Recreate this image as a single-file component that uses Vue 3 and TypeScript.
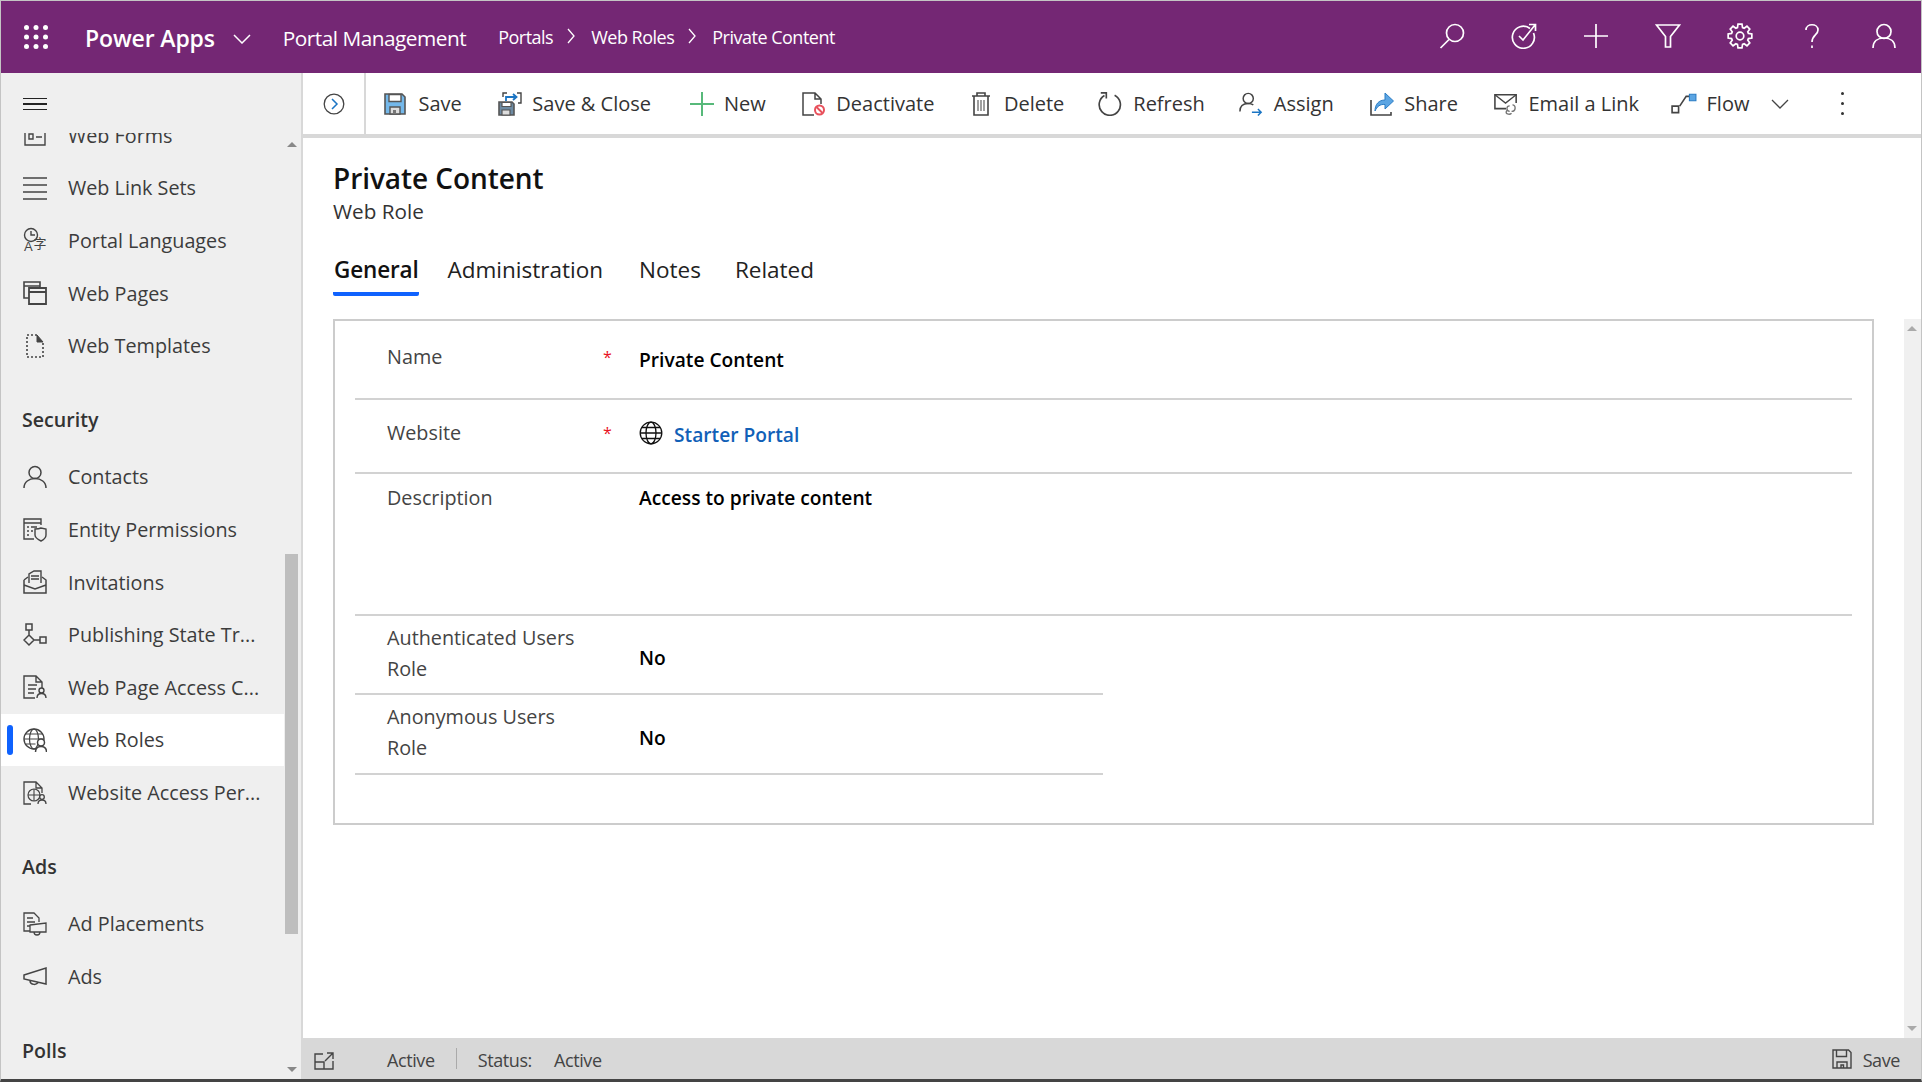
<template>
  <svg class="defs" aria-hidden="true">
    <symbol id="i-save" viewBox="0 0 22 22">
      <path d="M1 1h17l3 3v17H1z" fill="#74b8ea" stroke="#555" stroke-width="1.6"/>
      <path d="M5 1.500h12v7H5z" fill="#fff" stroke="#555" stroke-width="1.4"/>
      <path d="M6 21v-7h10v7z" fill="#ddd" stroke="#555" stroke-width="1.4"/>
      <path d="M9 21v-4h3v4z" fill="#777"/>
    </symbol>
    <symbol id="i-saveclose" viewBox="0 0 24 24">
      <path d="M1 10h13l2 2v11H1z" fill="#6d8ba3" stroke="#555" stroke-width="1.6"/>
      <path d="M4 10.500h9v4H4z" fill="#fff" stroke="#555" stroke-width="1.2"/>
      <path d="M4 23v-5h8v5z" fill="#ddd" stroke="#555" stroke-width="1.2"/>
      <path d="M5 5V1h4M19 1h4v10h-3" stroke="#444" stroke-width="1.4" fill="none"/>
      <path d="M8 9V5h10M15 2l3.500 3-3.500 3" stroke="#1b75c4" stroke-width="1.8" fill="none"/>
    </symbol>
    <symbol id="i-plus" viewBox="0 0 24 24">
      <path d="M12 0v24M0 12h24" stroke="#57b97a" stroke-width="2"/>
    </symbol>
    <symbol id="i-deactivate" viewBox="0 0 24 24">
      <path d="M12 23H1V1h12l6 6v5M13 1v6h6" stroke="#444" stroke-width="1.500" fill="none"/>
      <circle cx="17.500" cy="18" r="4.500" stroke="#e8505b" stroke-width="2" fill="#fff"/>
      <path d="M14.500 15l6 6" stroke="#e8505b" stroke-width="2"/>
    </symbol>
    <symbol id="i-delete" viewBox="0 0 20 24">
      <path d="M1 4h18M6 4V1h8v3M3 4v19h14V4" stroke="#444" stroke-width="1.600" fill="none"/>
      <path d="M7 8v11M10 8v11M13 8v11" stroke="#777" stroke-width="1.400"/>
    </symbol>
    <symbol id="i-refresh" viewBox="0 0 26 26">
      <path d="M18 3.500A11.500 11.500 0 1 1 7 3.800" stroke="#444" stroke-width="1.800" fill="none"/>
      <path d="M3 1h6v6" stroke="#444" stroke-width="1.800" fill="none"/>
    </symbol>
    <symbol id="i-assign" viewBox="0 0 26 26">
      <circle cx="10" cy="7" r="5.500" stroke="#444" stroke-width="1.600" fill="none"/>
      <path d="M1 21c0-6 4-8.500 9-8.500 2 0 4 .5 5.500 1.500" stroke="#444" stroke-width="1.600" fill="none"/>
      <path d="M14 22h10M20.500 18.500L24 22l-3.500 3.500" stroke="#1b75c4" stroke-width="1.600" fill="none"/>
    </symbol>
    <symbol id="i-share" viewBox="0 0 24 24">
      <path d="M1 8v15h20v-3" stroke="#444" stroke-width="1.600" fill="none"/>
      <path d="M5 19c0-7 4-11 10-11V1l8.500 8-8.500 8v-4.500c-5-.5-8 2-10 6.500z" fill="#5ba5e3" stroke="#2a7cc4" stroke-width="1"/>
    </symbol>
    <symbol id="i-email" viewBox="0 0 26 24">
      <path d="M13 17H1V2h23v9" stroke="#444" stroke-width="1.700" fill="none"/>
      <path d="M1 2l11.500 9L24 2" stroke="#444" stroke-width="1.400" fill="none"/>
      <path d="M17 14c-4 0-4 6 0 6M20 13c4 0 4 7-1 7M14 19c-3 4 3 5 5 3" stroke="#777" stroke-width="1.500" fill="none"/>
    </symbol>
    <symbol id="i-flow" viewBox="0 0 24 20">
      <path d="M1 12h6v6H1z" stroke="#444" stroke-width="1.500" fill="#fff"/>
      <path d="M8 12l6-9h3" stroke="#444" stroke-width="1.500" fill="none"/>
      <path d="M17 1h6v6h-6z" fill="#5ba5e3" stroke="#2a7cc4" stroke-width="1"/>
    </symbol>
    <symbol id="n-forms" viewBox="0 0 24 24">
      <path d="M2 2h20v20H2zM6 11h4v5H6zM13 14h6M6 6h12" stroke-width="1.400"/>
    </symbol>
    <symbol id="n-sets" viewBox="0 0 24 24">
      <path d="M0 2h24M0 9h24M0 16h24M0 23h24" stroke-width="1.600"/>
    </symbol>
    <symbol id="n-pages" viewBox="0 0 24 24">
      <path d="M1 1h16v16H1zM1 5h16" stroke-width="1.600"/>
      <path d="M6 7h17v16H6zM6 11h17" fill="#efefef" stroke-width="1.800"/>
    </symbol>
    <symbol id="n-template" viewBox="0 0 24 24">
      <path d="M14 1H4v22h16V8" stroke-width="1.600" stroke-dasharray="2 2"/>
      <path d="M14 1v7h6z" fill="#444" stroke-width="1"/>
    </symbol>
    <symbol id="n-contact" viewBox="0 0 24 24">
      <circle cx="12" cy="7.500" r="6" stroke-width="1.500"/>
      <path d="M1 23c0-6 5-9.500 11-9.500S23 17 23 23" stroke-width="1.500"/>
    </symbol>
    <symbol id="n-entity" viewBox="0 0 24 24">
      <path d="M11 21H1V1h17v6M1 5h17M4 9h2M8 9h6M4 13h2M8 13h2M4 17h2" stroke-width="1.400"/>
      <path d="M12 11c4 0 6-1 6-1s5 1 5 1v6c0 3-3 5-5 6-2-1-6-3-6-6z" stroke-width="1.400" fill="#efefef"/>
    </symbol>
    <symbol id="n-invite" viewBox="0 0 24 24">
      <path d="M1 10v13h22V10l-4-3M1 10l4-3M1 15l11 4 11-4" stroke-width="1.500"/>
      <path d="M6 13V4l5-3h7v12" stroke-width="1.400"/>
      <path d="M8 6h8M8 9h8" stroke-width="1.400"/>
    </symbol>
    <symbol id="n-publish" viewBox="0 0 24 24">
      <path d="M3 1h6v6H3zM6 7v5M17 14h6v6h-6zM11 17h6M6 12l5 5-5 5-5-5z" stroke-width="1.500"/>
    </symbol>
    <symbol id="n-pageaccess" viewBox="0 0 24 24">
      <path d="M12 23H1V1h12l6 6v6M13 1v6h6M5 10h9M5 14h8M5 18h6" stroke-width="1.400"/>
      <circle cx="18.500" cy="15.500" r="2.500" stroke-width="1.400"/>
      <path d="M14 23c0-3 2-4.500 4.500-4.500S23 20 23 23" stroke-width="1.400"/>
    </symbol>
    <symbol id="n-roles" viewBox="0 0 24 24">
      <circle cx="11" cy="11" r="10" stroke-width="1.400"/>
      <ellipse cx="11" cy="11" rx="4.500" ry="10" stroke-width="1.200"/>
      <path d="M1 11h20M2.500 6h17M2.500 16h10" stroke-width="1.200"/>
      <circle cx="18" cy="14.500" r="3.500" stroke-width="1.500" fill="#fff"/>
      <path d="M12.500 24c0-3.500 2-5.500 5.500-5.500s5.500 2 5.500 5.500" stroke-width="1.500" fill="#fff"/>
    </symbol>
    <symbol id="n-siteaccess" viewBox="0 0 24 24">
      <path d="M8 23H1V1h12l6 6v5M13 1v6h6" stroke-width="1.300"/>
      <circle cx="11" cy="14" r="6" stroke-width="1.200"/>
      <path d="M5 14h12M11 8v12" stroke-width="1.100"/>
      <circle cx="19" cy="16" r="2.300" stroke-width="1.300" fill="#efefef"/>
      <path d="M15 23c0-3 2-4 4-4s4 1 4 4" stroke-width="1.300" fill="#efefef"/>
    </symbol>
    <symbol id="n-placement" viewBox="0 0 24 24">
      <path d="M10 19H1V1h10l5 5v4M4 6h6M4 10h8M4 14h4" stroke-width="1.300"/>
      <path d="M7 13l16-2v9H7zM11 20c0 4 6 4 6 0" stroke-width="1.300" fill="#efefef"/>
    </symbol>
    <symbol id="n-ads" viewBox="0 0 24 24">
      <path d="M1 11l22-7v16L1 15zM7 16.500c0 5 8 5 8 1" stroke-width="1.500"/>
    </symbol>
  </svg>

  <div class="app">
    <header class="topbar">
      <svg class="waffle" viewBox="0 0 24 24">
        <circle v-for="d in waffleDots" :key="d.id" :cx="d.x" :cy="d.y" r="2.500" fill="#fff" />
      </svg>
      <span class="brand">Power Apps</span>
      <svg class="brand-chev" viewBox="0 0 18 10"><path d="M1 1l8 8 8-8" /></svg>
      <span class="app-name">Portal Management</span>
      <nav class="crumbs">
        <span>Portals</span>
        <svg class="crumb-sep" viewBox="0 0 8 16"><path d="M1 1l6 7-6 7" /></svg>
        <span>Web Roles</span>
        <svg class="crumb-sep" viewBox="0 0 8 16"><path d="M1 1l6 7-6 7" /></svg>
        <span>Private Content</span>
      </nav>
      <div class="top-icons">
        <svg viewBox="0 0 26 26"><circle cx="16" cy="10" r="8.500" /><path d="M10 16.500L1.500 25" /></svg>
        <svg viewBox="0 0 26 26">
          <path d="M19 5.500A11 11 0 1 0 22.500 10" /><path d="M8 13l4 4 12-15M18 1.500h6.500V8" />
        </svg>
        <svg viewBox="0 0 26 26"><path d="M13 1v24M1 13h24" /></svg>
        <svg viewBox="0 0 26 26"><path d="M1.500 2h23l-9 11.500V24h-5V13.500z" /></svg>
        <svg viewBox="0 0 26 26"><path :d="gearPath" /><circle cx="13" cy="13" r="3.800" /></svg>
        <svg viewBox="0 0 26 26">
          <path d="M7 7c0-7 12-7 12 0 0 5-6 5-6 12" /><path d="M13 22.500v2.500" />
        </svg>
        <svg viewBox="0 0 26 26"><circle cx="13" cy="8.500" r="7" /><path d="M2 25c0-7 5-10 11-10s11 3 11 10" /></svg>
      </div>
    </header>

    <div class="body">
      <aside class="nav">
        <div class="nav-head">
          <div class="burger"><i></i><i></i><i></i></div>
        </div>
        <div class="nav-scroll">
          <div class="nav-inner">
            <template v-for="g in navGroups" :key="g.title">
              <div v-if="g.title" class="nav-title">{{ g.title }}</div>
              <div v-for="it in g.items" :key="it.label" class="nav-item" :class="{ active: it.active }">
                <svg v-if="it.icon === 'n-lang'" class="nav-ic" viewBox="0 0 24 24">
                  <circle cx="8" cy="7" r="6.500" stroke-width="1.400" />
                  <path d="M8 3v4h4" stroke-width="1.400" />
                  <text x="1" y="23" class="lang-a">A</text>
                  <text x="10.500" y="20" class="lang-z">字</text>
                </svg>
                <svg v-else class="nav-ic"><use :href="'#' + it.icon" /></svg>
                <span>{{ it.label }}</span>
              </div>
            </template>
          </div>
          <div class="nav-bar">
            <b class="arrow up"></b>
            <div class="thumb"></div>
            <b class="arrow down"></b>
          </div>
        </div>
      </aside>

      <main class="main">
        <div class="toolbar">
          <div class="collapse">
            <svg viewBox="0 0 22 22">
              <circle cx="11" cy="11" r="9.800" fill="none" stroke="#444" stroke-width="1.300" />
              <path d="M9 6l5 5-5 5" fill="none" stroke="#1b75c4" stroke-width="1.500" />
            </svg>
          </div>
          <div class="commands">
            <div
              v-for="c in commands"
              :key="c.label"
              class="cmd"
              :style="{ marginRight: c.after + 'px' }"
            >
              <svg :class="c.cls"><use :href="'#' + c.icon" /></svg>
              <span>{{ c.label }}</span>
            </div>
            <svg class="flow-chev" viewBox="0 0 18 10"><path d="M1 1l8 8 8-8" /></svg>
            <div class="more"><i></i><i></i><i></i></div>
          </div>
        </div>

        <div class="content">
          <div class="form">
            <h1>Private Content</h1>
            <div class="subtitle">Web Role</div>
            <div class="tabs">
              <span class="tab on">General</span>
              <span class="tab t2">Administration</span>
              <span class="tab t3">Notes</span>
              <span class="tab t4">Related</span>
            </div>
            <section class="card">
              <div class="row r-name">
                <span class="lbl">Name</span><span class="req">*</span>
                <span class="val">Private Content</span>
              </div>
              <div class="row r-site">
                <span class="lbl">Website</span><span class="req">*</span>
                <span class="val link">
                  <svg viewBox="0 0 24 24">
                    <circle cx="12" cy="12" r="10.800" />
                    <ellipse cx="12" cy="12" rx="5" ry="10.800" />
                    <path d="M1.200 12h21.600M3 6.500h18M3 17.500h18" />
                  </svg>
                  Starter Portal
                </span>
              </div>
              <div class="row r-desc">
                <span class="lbl">Description</span><span></span>
                <span class="val">Access to private content</span>
              </div>
              <div class="row r-short">
                <span class="lbl">Authenticated Users<br />Role</span><span></span>
                <span class="val">No</span>
              </div>
              <div class="row r-short r-anon">
                <span class="lbl">Anonymous Users<br />Role</span><span></span>
                <span class="val">No</span>
              </div>
            </section>
          </div>
          <div class="vscroll">
            <b class="arrow up"></b>
            <b class="arrow down"></b>
          </div>
        </div>

        <footer class="status">
          <svg class="expand" viewBox="0 0 20 18">
            <path d="M9 2H1v15h18V9M1 10h9v7M13 1h6v6M19 1l-8 8" />
          </svg>
          <span class="s1">Active</span>
          <i class="sep"></i>
          <span class="s2">Status:</span>
          <span class="s3">Active</span>
          <div class="status-save">
            <svg viewBox="0 0 20 20">
              <path d="M1 1h15.500L19 3.500V19H1z" />
              <path d="M4.500 1v6.500h10V1M5 19v-6h10v6M9 19v-3h2.500v3" />
            </svg>
            <span>Save</span>
          </div>
        </footer>
      </main>
    </div>
  </div>
</template>

<script setup lang="ts">
interface NavItem {
  label: string
  icon: string
  active?: boolean
}

const waffleDots: { id: number; x: number; y: number }[] = []
for (let r = 0; r < 3; r++) {
  for (let c = 0; c < 3; c++) {
    waffleDots.push({ id: r * 3 + c, x: 2.5 + c * 9.5, y: 2.5 + r * 9.5 })
  }
}

// 8 tooth gear outline
function makeGear(): string {
  const pts: string[] = []
  const teeth = 8
  for (let i = 0; i < teeth; i++) {
    const a = (i / teeth) * Math.PI * 2
    const step = (Math.PI * 2) / teeth
    const offs: [number, number][] = [
      [-0.3, 8.8],
      [-0.17, 12],
      [0.17, 12],
      [0.3, 8.8],
    ]
    for (const [o, rad] of offs) {
      const t = a + o * step * 1.25
      pts.push((13 + Math.cos(t) * rad).toFixed(2) + ' ' + (13 + Math.sin(t) * rad).toFixed(2))
    }
  }
  return 'M' + pts.join('L') + 'z'
}
const gearPath = makeGear()

const navGroups: { title: string; items: NavItem[] }[] = [
  {
    title: '',
    items: [
      { label: 'Web Forms', icon: 'n-forms' },
      { label: 'Web Link Sets', icon: 'n-sets' },
      { label: 'Portal Languages', icon: 'n-lang' },
      { label: 'Web Pages', icon: 'n-pages' },
      { label: 'Web Templates', icon: 'n-template' },
    ],
  },
  {
    title: 'Security',
    items: [
      { label: 'Contacts', icon: 'n-contact' },
      { label: 'Entity Permissions', icon: 'n-entity' },
      { label: 'Invitations', icon: 'n-invite' },
      { label: 'Publishing State Tr...', icon: 'n-publish' },
      { label: 'Web Page Access C...', icon: 'n-pageaccess' },
      { label: 'Web Roles', icon: 'n-roles', active: true },
      { label: 'Website Access Per...', icon: 'n-siteaccess' },
    ],
  },
  {
    title: 'Ads',
    items: [
      { label: 'Ad Placements', icon: 'n-placement' },
      { label: 'Ads', icon: 'n-ads' },
    ],
  },
  { title: 'Polls', items: [] },
]

const commands = [
  { label: 'Save', icon: 'i-save', cls: 'w22 wide2', after: 36.5 },
  { label: 'Save & Close', icon: 'i-saveclose', cls: 'w24', after: 39 },
  { label: 'New', icon: 'i-plus', cls: 'w24', after: 36.5 },
  { label: 'Deactivate', icon: 'i-deactivate', cls: 'w24', after: 36.5 },
  { label: 'Delete', icon: 'i-delete', cls: 'w20 wide', after: 33 },
  { label: 'Refresh', icon: 'i-refresh', cls: 'w26', after: 33 },
  { label: 'Assign', icon: 'i-assign', cls: 'w26', after: 36.5 },
  { label: 'Share', icon: 'i-share', cls: 'w24', after: 36.5 },
  { label: 'Email a Link', icon: 'i-email', cls: 'w24', after: 31.5 },
  { label: 'Flow', icon: 'i-flow', cls: 'w26', after: 36.5 },
]
</script>

<style>
html, body { margin: 0; padding: 0; background: #fff; overflow: hidden; }
</style>

<style scoped>
.defs { position: absolute; width: 0; height: 0; overflow: hidden; }
.app {
  width: 1922px; height: 1082px; box-sizing: border-box;
  border: 1px solid #c4c4c4; border-bottom: 3px solid #444;
  display: flex; flex-direction: column;
  font-family: "Open Sans", "Liberation Sans", sans-serif;
  color: #333;
  overflow: hidden;
}

/* top bar */
.topbar {
  height: 72px; flex: none; background: #742774; color: #fff;
  display: flex; align-items: center;
}
.waffle { width: 24px; height: 24px; margin-left: 23px; }
.brand { margin-left: 37px; font-size: 23px; font-weight: 600; letter-spacing: -0.13px; margin-top: 2px; }
.brand-chev { width: 18px; height: 10px; margin-left: 18px; fill: none; stroke: #fff; stroke-width: 1.5; margin-top: 4px; }
.app-name { margin-left: 32px; font-size: 20.800px; letter-spacing: -0.5px; margin-top: 1px; }
.crumbs { display: flex; align-items: center; margin-left: 32px; font-size: 18px; letter-spacing: -0.5px; }
.crumb-sep { width: 8px; height: 16px; margin: -2px 16px 0 14px; fill: none; stroke: #fff; stroke-width: 1.3; }
.top-icons { margin-left: auto; margin-right: 24px; display: flex; gap: 46px; margin-top: -2px; }
.top-icons svg { width: 26px; height: 26px; fill: none; stroke: #fff; stroke-width: 1.7; }

.body { flex: 1; min-height: 0; display: flex; }

/* left nav */
.nav {
  width: 300px; flex: none; background: #efefef; border-right: 2px solid #d8d8d8;
  display: flex; flex-direction: column;
}
.nav-head { height: 60px; flex: none; display: flex; align-items: center; padding-left: 22px; }
.burger { width: 24px; display: flex; flex-direction: column; gap: 4px; padding-top: 2px; }
.burger i { display: block; height: 1.5px; background: #222; }
.nav-scroll { flex: 1; min-height: 0; overflow: hidden; position: relative; }
.nav-inner { margin-top: -24px; width: 283px; }
.nav-item {
  height: 52.6px; display: flex; align-items: center; position: relative;
  padding-left: 22px; font-size: 19.800px; color: #3c3c3c;
}
.nav-item.active { background: #fff; }
.nav-item.active::before {
  content: ""; position: absolute; left: 6px; top: 11px; width: 6px; height: 30px;
  border-radius: 3px; background: #0f62fe;
}
.nav-ic {
  width: 24px; height: 24px; margin-right: 21px; flex: none;
  fill: none; stroke: #444; overflow: visible;
}
.lang-a { font: 13px "Liberation Sans", sans-serif; fill: #444; stroke: none; }
.lang-z { font: 13px "Noto Sans CJK SC", sans-serif; fill: #444; stroke: none; }
.nav-title {
  height: 40px; line-height: 40px; margin-top: 28px; margin-bottom: 10.7px;
  padding-left: 21px; font-size: 19.600px; font-weight: 600; color: #333;
}
.nav-bar { position: absolute; right: 0; top: 0; bottom: 0; width: 16px; }
.thumb { position: absolute; left: 0; width: 13px; top: 421px; height: 380px; background: #bebebe; }
.arrow { position: absolute; width: 0; height: 0; border-left: 5px solid transparent; border-right: 5px solid transparent; }
.arrow.up { border-bottom: 5px solid #888; }
.arrow.down { border-top: 5px solid #888; }
.nav-bar .arrow { left: 2px; }
.nav-bar .arrow.up { top: 9px; }
.nav-bar .arrow.down { bottom: 7px; }

/* main */
.main { flex: 1; min-width: 0; display: flex; flex-direction: column; }
.toolbar {
  height: 61px; flex: none; border-bottom: 4px solid #d8d8d8;
  display: flex; align-items: stretch; box-sizing: content-box;
}
.collapse {
  width: 61px; flex: none; border-right: 2px solid #d8d8d8;
  display: flex; align-items: center; justify-content: center;
}
.collapse svg { width: 22px; height: 22px; }
.commands { flex: 1; display: flex; align-items: center; padding-left: 18px; font-size: 20px; color: #333; }
.cmd { display: flex; align-items: center; gap: 10px; }
.cmd svg { height: 24px; flex: none; }
.w20 { width: 20px; }
.w22 { width: 22px; }
.w24 { width: 24px; }
.w26 { width: 26px; }
.wide { margin-right: 3px; }
.wide2 { margin-right: 2.500px; }
.flow-chev { width: 18px; height: 10px; margin-left: -15px; fill: none; stroke: #444; stroke-width: 1.3; }
.more { margin-left: 52px; display: flex; flex-direction: column; gap: 7px; }
.more i { width: 3px; height: 3px; border-radius: 50%; background: #333; }

.content { flex: 1; min-height: 0; display: flex; }
.form { flex: 1; min-width: 0; padding: 21px 30px 0; }
h1 { margin: 0; font-size: 28px; line-height: 38px; font-weight: 600; color: #111; letter-spacing: -0.07px; }
.subtitle { margin-top: 1px; font-size: 20.700px; line-height: 26px; font-weight: 500; color: #333; }
.tabs { display: flex; margin-top: 25.500px; height: 47px; font-size: 22.500px; color: #222; }
.tab { height: 42px; line-height: 40px; padding-left: 1px; }
.tab.on { font-weight: 600; color: #111; letter-spacing: -0.15px; border-bottom: 4px solid #0f62fe; border-radius: 0 0 2px 2px; }
.tab.t2 { margin-left: 28px; }
.tab.t3 { margin-left: 35px; }
.tab.t4 { margin-left: 33px; }
.card {
  margin-top: 22px; box-sizing: border-box; width: 1541px; height: 506px;
  border: 2px solid #ccc; padding: 0 20px;
}
.row {
  display: grid; grid-template-columns: 219px 33px 1fr; padding-left: 32px; align-items: start;
  box-sizing: border-box; border-bottom: 2px solid #d2d2d2;
  font-size: 19.800px;
}
.lbl { color: #444; line-height: 31px; }
.req { color: #e81123; font-size: 16px; line-height: 24px; margin: 4px 0 0 -3px; }
.val { color: #000; font-weight: 600; line-height: 28px; font-size: 19.200px; }
.r-name { height: 79px; padding-top: 20px; }
.r-name .val { margin-top: 5px; }
.r-site { height: 74px; padding-top: 17px; }
.r-site .val { margin-top: 4px; }
.r-desc { height: 142px; padding-top: 8px; }
.r-desc .val { line-height: 32px; }
.r-short { width: 748px; height: 79px; padding-top: 6px; }
.r-short .val { margin-top: 22px; }
.r-anon { height: 80px; padding-top: 6px; }
.r-anon .val { margin-top: 23px; }
.link { color: #1160b7; display: flex; align-items: center; gap: 11px; }
.link svg { width: 24px; height: 24px; fill: none; stroke: #111; stroke-width: 1.300; margin-top: -3px; }

.vscroll { width: 17px; flex: none; margin-top: 181px; background: #f0f0f0; position: relative; }
.vscroll .arrow { left: 3px; }
.vscroll .arrow.up { top: 7px; border-bottom-color: #aaa; }
.vscroll .arrow.down { bottom: 7px; border-top-color: #aaa; }

/* status bar */
.status {
  height: 41px; flex: none; background: #d8d8d8; display: flex; align-items: center;
  font-size: 18px; letter-spacing: -0.4px; color: #444;
}
.status span { padding-top: 2px; }
.expand { width: 20px; height: 18px; margin-left: 11px; fill: none; stroke: #444; stroke-width: 1.400; margin-top: 5px; }
.s1 { margin-left: 53px; }
.sep { width: 1px; height: 21px; background: #aaa; margin-left: 21px; }
.s2 { margin-left: 21px; }
.s3 { margin-left: 22px; }
.status-save { margin-left: auto; margin-right: 21px; display: flex; align-items: center; gap: 11px; }
.status-save svg { width: 20px; height: 20px; fill: none; stroke: #444; stroke-width: 1.400; }
</style>
